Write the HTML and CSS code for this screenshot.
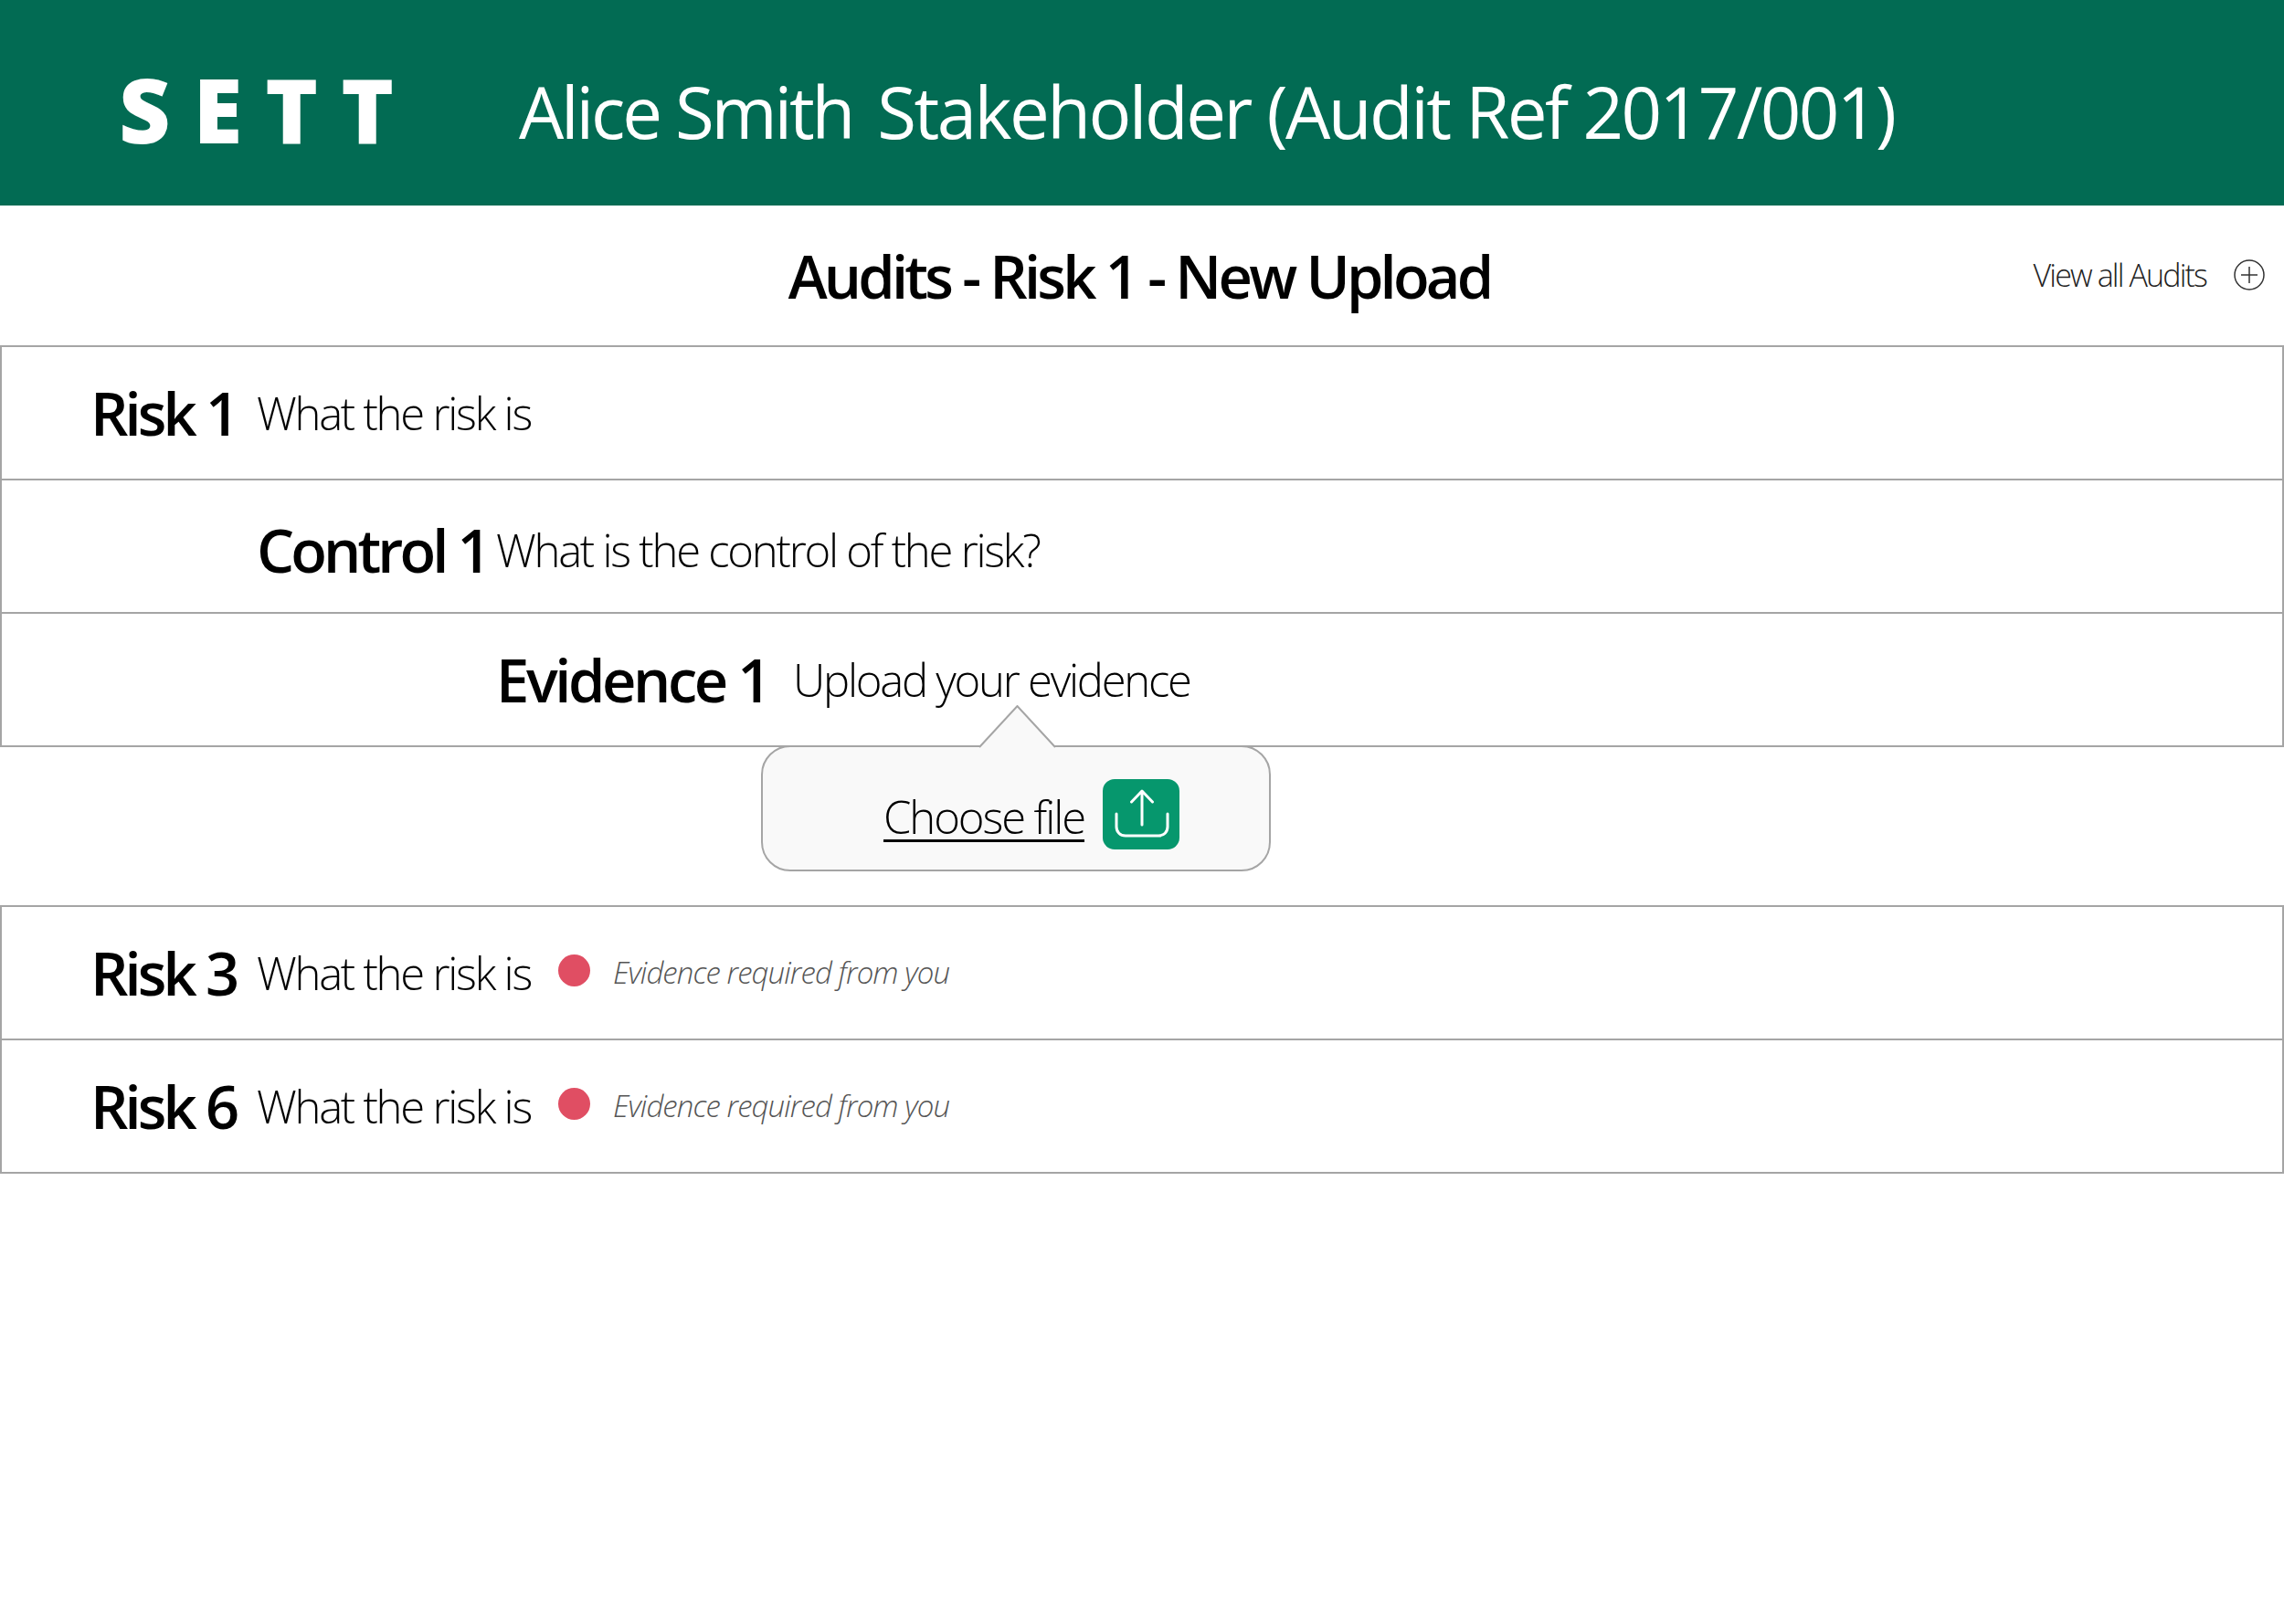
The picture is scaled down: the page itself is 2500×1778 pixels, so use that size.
FILE: index.html
```html
<!DOCTYPE HTML>
<html lang="en">
<head>
<meta charset="utf-8"/>
<title>SETT Audits</title>
<link rel="stylesheet" href="styles.css">
</head>
<body>

<header class="topbar">
  <div class="logo">SETT</div>
  <div class="user"><span class="user-name">Alice Smith</span><span class="user-role">Stakeholder (Audit Ref 2017/001)</span></div>
</header>

<div class="titlebar">
  <h1 class="title">Audits - Risk 1 - New Upload</h1>
  <a class="viewall">View all Audits
    <svg class="plus" viewBox="0 0 34 34" width="34" height="34">
      <circle cx="17" cy="17" r="16" fill="none" stroke="#333" stroke-width="1.5"/>
      <path d="M17 8V26M8 17H26" fill="none" stroke="#333" stroke-width="1.5"/>
    </svg>
  </a>
</div>

<div class="rows">
  <div class="row"><b class="name">Risk 1</b><span class="desc">What the risk is</span></div>
  <div class="row control"><b class="name">Control 1</b><span class="desc">What is the control of the risk?</span></div>
  <div class="row evidence"><b class="name">Evidence 1</b><span class="desc">Upload your evidence</span></div>
</div>

<div class="popup">
  <svg class="popup-tip" viewBox="0 0 85 47" width="85" height="47">
    <path d="M1 46L42.500 1L84 46" fill="#f9f9f9" stroke="#a5a5a5" stroke-width="2"/>
  </svg>
  <a class="choose">Choose file</a>
  <span class="upload">
    <svg viewBox="0 0 84 77" width="84" height="77">
      <path d="M43 14V50M31.500 25L43 13L54.500 25M15 38V52C15 58 19 62 25 62H61C67 62 71 58 71 52V38" fill="none" stroke="#fff" stroke-width="3" stroke-linecap="round" stroke-linejoin="round"/>
    </svg>
  </span>
</div>

<div class="rows lower">
  <div class="row"><b class="name">Risk 3</b><span class="desc">What the risk is</span><i class="dot"></i><em class="note">Evidence required from you</em></div>
  <div class="row"><b class="name">Risk 6</b><span class="desc">What the risk is</span><i class="dot"></i><em class="note">Evidence required from you</em></div>
</div>

</body>
</html>
```

FILE: styles.css
```css
body {
  margin: 0;
  font-family: "Open Sans", "Noto Sans", sans-serif;
  color: #000;
  background: #fff;
}

.topbar {
  display: flex;
  align-items: center;
  box-sizing: border-box;
  height: 225px;
  padding: 12px 0 0 130px;
  background: #026b53;
  color: #fff;
}

.logo {
  width: 438px;
  font-size: 98px;
  font-weight: 800;
  letter-spacing: 25px;
}

.user {
  display: flex;
  gap: 27px;
  margin-top: 7px;
  font-size: 78px;
  white-space: nowrap;
}

.user-name { letter-spacing: -3.200px; }
.user-role { letter-spacing: -2.550px; }

.titlebar {
  display: flex;
  align-items: center;
  justify-content: center;
  height: 153px;
  position: relative;
}

.title {
  margin: 0 6px 0 0;
  font-size: 65px;
  font-weight: 600;
  letter-spacing: -3.800px;
}

.viewall {
  position: absolute;
  right: 21px;
  top: 53px;
  display: flex;
  align-items: center;
  gap: 30px;
  font-size: 34px;
  font-weight: 300;
  letter-spacing: -1.850px;
  color: #222;
}

.plus { display: block; }

.rows {
  border-top: 2px solid #a5a5a5;
}

.row {
  display: flex;
  align-items: center;
  box-sizing: border-box;
  height: 146px;
  padding-left: 97px;
  border: solid #a5a5a5;
  border-width: 0 2px 2px 2px;
}

.control { padding: 8px 0 0 279px; }
.evidence { padding-left: 541px; }

.name {
  width: 182px;
  font-size: 65px;
  font-weight: 600;
  letter-spacing: -3.900px;
  white-space: nowrap;
}

.control .name { width: 262px; }
.evidence .name { width: 325px; letter-spacing: -3.400px; }

.desc {
  font-size: 49px;
  font-weight: 300;
  letter-spacing: -2.250px;
}

.dot {
  width: 35px;
  height: 35px;
  margin: 0 25px 5px 30px;
  border-radius: 50%;
  background: #e04e63;
}

.note {
  margin-bottom: 2px;
  font-size: 33px;
  font-weight: 300;
  letter-spacing: -0.900px;
  color: #555;
}

.popup {
  position: relative;
  display: flex;
  align-items: center;
  justify-content: flex-end;
  box-sizing: border-box;
  width: 558px;
  height: 138px;
  margin: -2px 0 0 833px;
  padding: 12px 98px 0 0;
  gap: 20px;
  background: #f9f9f9;
  border: 2px solid #a5a5a5;
  border-radius: 32px;
}

.popup-tip {
  position: absolute;
  left: 236px;
  top: -46px;
}

.choose {
  margin-top: 6px;
  font-size: 49px;
  font-weight: 300;
  letter-spacing: -2.100px;
  text-decoration: underline;
  text-decoration-thickness: 3px;
  text-underline-offset: 6px;
}

.upload {
  display: block;
  width: 84px;
  height: 77px;
  border-radius: 13px;
  background: #06976d;
}

.upload svg { display: block; }

.lower { margin-top: 37px; }
```
